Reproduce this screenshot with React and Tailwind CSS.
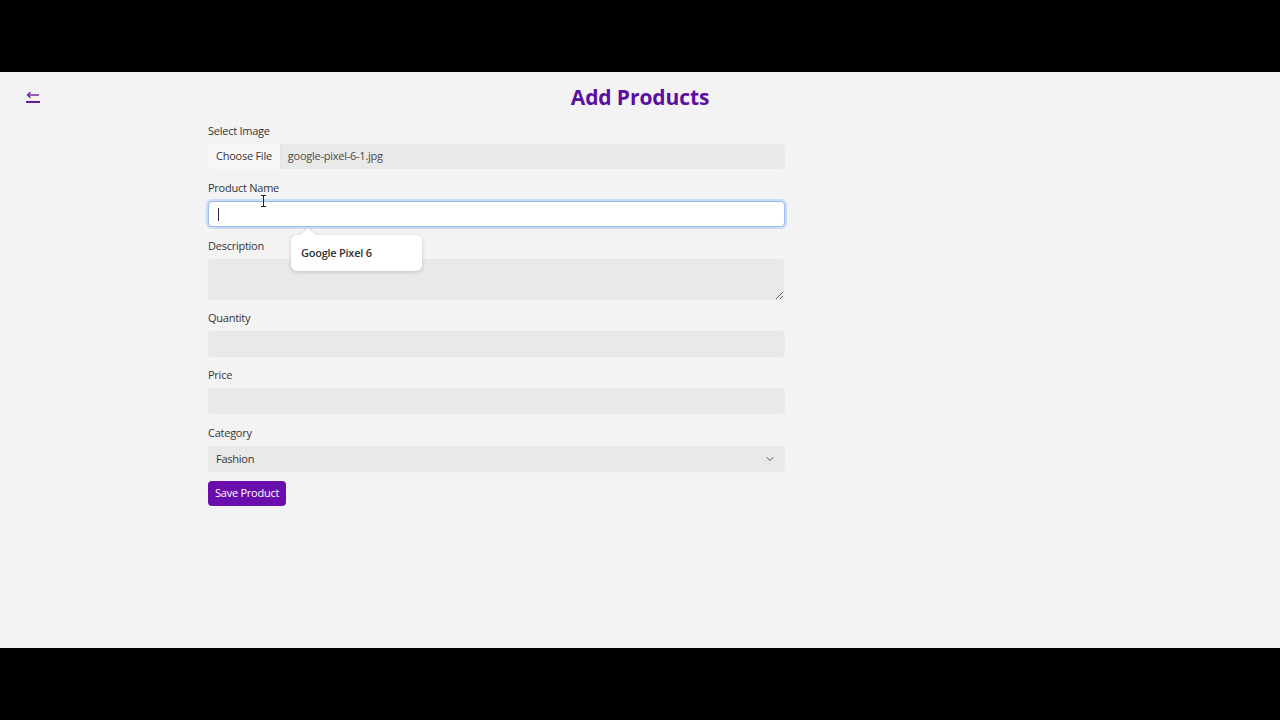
import React from 'react';
import { ChevronDown } from 'lucide-react';

const font = { fontFamily: '"Open Sans", "Noto Sans", Arial, sans-serif' };

function Field({ label, children, className = 'mb-[11px]' }) {
  return (
    <div className={`flex flex-col ${className}`}>
      <label className="text-[11px] leading-[16px] tracking-[-0.25px] text-[#333] mb-[5px]">{label}</label>
      {children}
    </div>
  );
}

export default function App() {
  return (
    <div className="w-full h-screen flex flex-col bg-black" style={font}>
      <div className="h-[72px] bg-black" />

      <main className="flex-1 bg-[#f3f3f3]">
        {/* Header */}
        <div className="grid grid-cols-[1fr_auto_1fr] items-center px-[26px] pt-[10px]">
          <button className="justify-self-start flex flex-col items-start w-[14px] text-[#6a1b9a]">
            <svg width="14" height="8" viewBox="0 0 14 8" fill="none" stroke="currentColor" strokeWidth="1.4">
              <path d="M13 4H2" />
              <path d="M4.5 1.2L1.5 4l3 2.8" />
            </svg>
            <span className="block w-[14px] h-[1.5px] bg-[#6a1b9a] mt-[2px]" />
          </button>
          <h1 className="text-[21px] leading-[30px] font-bold text-[#5a0fa0] tracking-[-0.1px]">Add Products</h1>
          <div />
        </div>

        {/* Form */}
        <form className="ml-[208px] w-[577px] mt-[11px] tracking-[-0.25px]">
          <Field label="Select Image">
            <div className="flex h-[25px] rounded-[4px] overflow-hidden bg-[#e9e9e9] text-[11px]">
              <span className="flex items-center px-[8px] bg-[#f8f8f8] text-[#333] border-r border-[#e4e4e4]">Choose File</span>
              <span className="flex items-center pl-[7px] text-[#4a4a4a]">google-pixel-6-1.jpg</span>
            </div>
          </Field>

          <Field label="Product Name" className="relative mb-[11px]">
            <div className="relative h-[26px] bg-white rounded-[4px] border border-[#9dbbeb] ring-2 ring-[#c9dbf6]">
              <span className="absolute left-[9px] top-[6px] w-px h-[13px] bg-[#333]" />
            </div>
            {/* mouse I-beam */}
            <svg className="absolute left-[52px] top-[15px]" width="7" height="12" viewBox="0 0 7 12" fill="none" stroke="#222" strokeWidth="1">
              <path d="M1 0.5h5M1 11.5h5M3.5 0.5v11" />
            </svg>
            {/* autofill suggestion */}
            <div className="absolute left-[83px] top-[55px] w-[131px] h-[36px] bg-white rounded-[6px] shadow-[0_1px_4px_rgba(0,0,0,0.18)] flex items-center pl-[10px] z-10">
              <span className="absolute left-[12px] -top-[5px] w-[10px] h-[10px] bg-white rotate-45 shadow-[-1px_-1px_2px_rgba(0,0,0,0.08)]" />
              <span className="relative text-[11px] font-semibold text-[#333]">Google Pixel 6</span>
            </div>
          </Field>

          <Field label="Description" className="mb-[10px]">
            <textarea className="h-[41px] w-[576px] rounded-[4px] bg-[#e9e9e9] outline-none block" />
          </Field>

          <Field label="Quantity" className="mb-[10px]">
            <input className="h-[26px] rounded-[4px] bg-[#e9e9e9] outline-none" />
          </Field>

          <Field label="Price" className="mb-[11px]">
            <input className="h-[26px] rounded-[4px] bg-[#e9e9e9] outline-none" />
          </Field>

          <Field label="Category" className="mb-[9px]">
            <div className="relative h-[26px] rounded-[4px] bg-[#e9e9e9] flex items-center px-[8px] text-[11px] text-[#333]">
              Fashion
              <ChevronDown className="absolute right-[9px] top-[7px] w-[12px] h-[12px] text-[#555]" strokeWidth={2} />
            </div>
          </Field>

          <button type="button" className="block h-[25px] px-[7px] rounded-[4px] bg-[#6a0dad] text-white text-[11px]">
            Save Product
          </button>
        </form>
      </main>

      <div className="h-[72px] bg-black" />
    </div>
  );
}
